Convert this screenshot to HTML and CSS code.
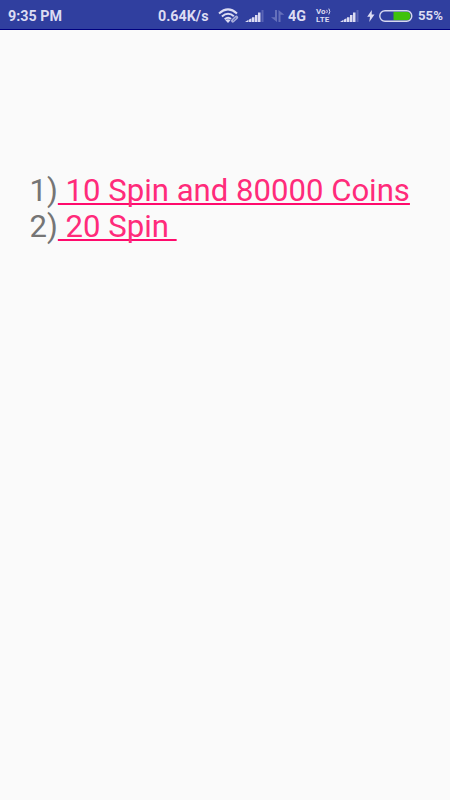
FILE: index.html
```html
<!DOCTYPE html>
<html lang="en">
<head>
<meta charset="utf-8">
<title>Spins and coins</title>
<link rel="stylesheet" href="styles.css">
</head>
<body>
<header class="status">
  <span class="time">9:35 PM</span>
  <span class="speed">0.64K/s</span>
  <svg class="wifi" width="22" height="16" viewBox="0 0 22 16" fill="none" stroke="#dcdcf2" stroke-width="2">
    <path d="M1 5.4Q10 -2.6 19 5.4M3.9 8.6Q10 3 16.2 8.6M6.7 11.2Q10 8.3 13.2 11"/>
    <path d="M7.4 12.2Q10 10.5 12.6 12.2L10 15Z" fill="#dcdcf2" stroke="none"/>
    <path d="M13.8 13.5L18.6 8.7" stroke="#303f9f" stroke-width="4.5"/>
    <path d="M14.8 12.8L18.4 9.4" stroke="#a8addb" stroke-width="3.6" stroke-linecap="round"/>
    <path d="M15 12.6L18.2 9.6" stroke="#4f5bae" stroke-width="1"/>
  </svg>
  <svg class="signal-one" width="20" height="14" viewBox="0 0 20 14" fill="#dcdcf2">
    <path d="M0 13L3.5 10.8V13ZM4 10.6L6.5 9.2V13H4ZM7 8.3H9.5V13H7ZM10 6H12.5V13H10ZM13 3.4H15.5V13H13Z"/><path d="M16.5 1H18.5V13H16.5Z" fill="#5964b5"/>
  </svg>
  <svg class="arrows" width="14" height="14" viewBox="0 0 14 14" fill="#6570bb">
    <path d="M4 1H6V13L0 8.2H4ZM7.5 13V1L13.3 5.8H9.5V13Z"/>
  </svg>
  <span class="network">4G</span>
  <span class="volte"><span class="vo">Vo<svg width="5" height="7" viewBox="0 0 5 7" fill="none" stroke="#dcdcf2"><path d="M.7 1.9Q1.9 3.5 .7 5.1M2.8 .6Q4.8 3.5 2.8 6.4"/></svg></span><span class="lte">LTE</span></span>
  <svg class="signal-two" width="20" height="14" viewBox="0 0 20 14" fill="#dcdcf2">
    <path d="M0 13L3.5 10.8V13ZM4 10.6L6.5 9.2V13H4ZM7 8.3H9.5V13H7ZM10 6H12.5V13H10ZM13 3.4H15.5V13H13Z"/><path d="M16.5 1H18.5V13H16.5Z" fill="#5964b5"/>
  </svg>
  <svg class="bolt" width="8" height="12" viewBox="0 0 8 12" fill="#dcdcf2"><path d="M4.8 0L.2 6.8H3L2.3 12L7.5 4.6H4.7Z"/></svg>
  <svg class="battery" width="34" height="12" viewBox="0 0 34 12">
    <path d="M14.5 1.7H28Q31.4 2 31.4 6T28 10.3H14.5Z" fill="#3fc20b"/>
    <rect x=".8" y=".8" width="32" height="10.4" rx="5.2" fill="none" stroke="#d7d8f0" stroke-width="1.4"/>
  </svg>
  <span class="percent">55%</span>
</header>
<main class="rewards">
  <div class="reward">1)<a>&nbsp;10 Spin and 80000 Coins</a></div>
  <div class="reward">2)<a>&nbsp;20 Spin&nbsp;</a></div>
</main>
</body>
</html>
```
FILE: styles.css
```css
body {
  margin: 0;
  min-height: 800px;
  background: #fafafa;
  font-family: Roboto, sans-serif;
}
.status {
  display: flex;
  align-items: center;
  box-sizing: border-box;
  height: 30px;
  padding: 2px 0 0 8px;
  background: #303f9f;
  border-bottom: 1px solid #00007f;
  color: #dcdcf2;
  font-size: 14.3px;
  font-weight: 700;
  line-height: 20px;
  white-space: nowrap;
}
.status > * { flex: none; }
.time { width: 150px; }
.speed { width: 59.5px; }
.wifi { margin-right: 5.5px; }
.signal-one { margin-right: 6px; }
.arrows { margin-right: 3px; }
.network { width: 28px; }
.volte {
  display: grid;
  grid-template-rows: 8px 7px;
  width: 24px;
  font-size: 8px;
  line-height: 7px;
}
.vo {
  display: flex;
  height: 7px;
}
.volte svg { margin-left: .5px; }
.lte { letter-spacing: .2px; }
.signal-two { margin-right: 7px; }
.bolt { margin-right: 4px; }
.battery { margin-right: 5px; }
.percent { font-size: 13.2px; }
.rewards {
  padding: 143px 29.5px 0;
  font-size: 31.12px;
  line-height: 36px;
  color: #757575;
  white-space: nowrap;
}
.reward a {
  color: #ff2b7a;
  text-decoration: underline #ff0a6c 1.6px;
  text-decoration-skip-ink: none;
  text-underline-offset: 2px;
}
```
